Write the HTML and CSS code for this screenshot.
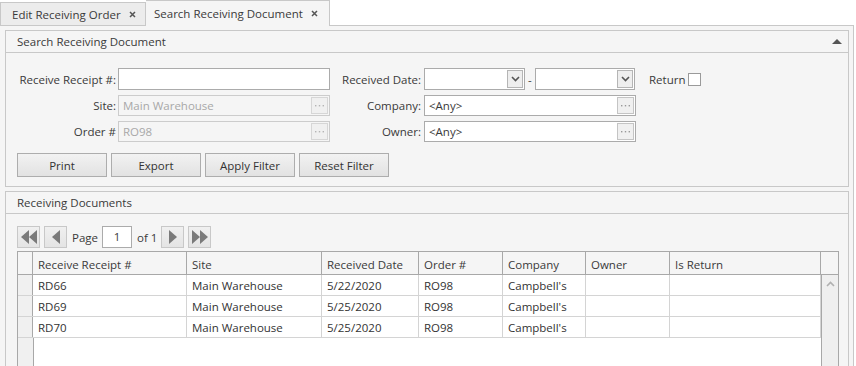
FILE: index.html
```html
<!DOCTYPE html>
<html>
<head>
<meta charset="utf-8">
<link rel="stylesheet" href="styles.css">
</head>
<body>
<div class="tabs">
  <div class="tab">Edit Receiving Order<span class="x"><svg width="7" height="7" viewBox="0 0 7 7"><path d="M1 1 L6 6 M6 1 L1 6" stroke="#555" stroke-width="1.5"/></svg></span></div>
  <div class="tab active">Search Receiving Document<span class="x"><svg width="7" height="7" viewBox="0 0 7 7"><path d="M1 1 L6 6 M6 1 L1 6" stroke="#555" stroke-width="1.5"/></svg></span></div>
</div>
<div class="main">
  <section class="panel search">
    <header class="panel-head"><span>Search Receiving Document</span><span class="collapse"></span></header>
    <div class="form">
      <div class="fgroup">
        <label>Receive Receipt #:</label><div class="input"></div>
        <label>Site:</label><div class="input disabled"><span class="val">Main Warehouse</span><span class="ell"><svg width="9" height="3" viewBox="0 0 9 3"><rect x="0" y="1" width="1.4" height="1.4" fill="#b4b4b4"/><rect x="3.8" y="1" width="1.4" height="1.4" fill="#b4b4b4"/><rect x="7.6" y="1" width="1.4" height="1.4" fill="#b4b4b4"/></svg></span></div>
        <label>Order #</label><div class="input disabled"><span class="val">RO98</span><span class="ell"><svg width="9" height="3" viewBox="0 0 9 3"><rect x="0" y="1" width="1.4" height="1.4" fill="#b4b4b4"/><rect x="3.8" y="1" width="1.4" height="1.4" fill="#b4b4b4"/><rect x="7.6" y="1" width="1.4" height="1.4" fill="#b4b4b4"/></svg></span></div>
      </div>
      <div class="fgroup right">
        <label>Received Date:</label>
        <div class="daterow">
          <div class="input date"><span class="dd"><svg width="9" height="6" viewBox="0 0 9 6"><path d="M1 1 L4.5 4.5 L8 1" fill="none" stroke="#555" stroke-width="1.6"/></svg></span></div>
          <span class="dash">-</span>
          <div class="input date"><span class="dd"><svg width="9" height="6" viewBox="0 0 9 6"><path d="M1 1 L4.5 4.5 L8 1" fill="none" stroke="#555" stroke-width="1.6"/></svg></span></div>
          <span class="ret">Return</span><span class="check"></span>
        </div>
        <label>Company:</label><div class="input narrow"><span class="val">&lt;Any&gt;</span><span class="ell"><svg width="9" height="3" viewBox="0 0 9 3"><rect x="0" y="1" width="1.4" height="1.4" fill="#999"/><rect x="3.8" y="1" width="1.4" height="1.4" fill="#999"/><rect x="7.6" y="1" width="1.4" height="1.4" fill="#999"/></svg></span></div>
        <label>Owner:</label><div class="input narrow"><span class="val">&lt;Any&gt;</span><span class="ell"><svg width="9" height="3" viewBox="0 0 9 3"><rect x="0" y="1" width="1.4" height="1.4" fill="#999"/><rect x="3.8" y="1" width="1.4" height="1.4" fill="#999"/><rect x="7.6" y="1" width="1.4" height="1.4" fill="#999"/></svg></span></div>
      </div>
    </div>
    <div class="buttons">
      <button class="btn">Print</button>
      <button class="btn">Export</button>
      <button class="btn">Apply Filter</button>
      <button class="btn">Reset Filter</button>
    </div>
  </section>
  <section class="panel docs">
    <header class="panel-head"><span>Receiving Documents</span></header>
    <div class="docs-body">
      <div class="pager">
        <span class="pbtn"><svg width="18" height="14" viewBox="0 0 18 14"><path d="M9 0 L1 7 L9 14 Z M17 0 L9 7 L17 14 Z" fill="#7a7a7a"/></svg></span>
        <span class="pbtn"><svg width="10" height="14" viewBox="0 0 10 14"><path d="M9 0 L1 7 L9 14 Z" fill="#7a7a7a"/></svg></span>
        <span class="ptext">Page</span>
        <span class="pinput">1</span>
        <span class="ptext">of 1</span>
        <span class="pbtn"><svg width="10" height="14" viewBox="0 0 10 14"><path d="M1 0 L9 7 L1 14 Z" fill="#7a7a7a"/></svg></span>
        <span class="pbtn"><svg width="18" height="14" viewBox="0 0 18 14"><path d="M1 0 L9 7 L1 14 Z M9 0 L17 7 L9 14 Z" fill="#7a7a7a"/></svg></span>
      </div>
      <div class="grid">
        <div class="ghead">
          <div class="hc sel"></div>
          <div class="hc">Receive Receipt #</div>
          <div class="hc">Site</div>
          <div class="hc">Received Date</div>
          <div class="hc">Order #</div>
          <div class="hc">Company</div>
          <div class="hc">Owner</div>
          <div class="hc">Is Return</div>
          <div class="hc last"></div>
        </div>
        <div class="gbody">
          <div class="rows">
            <div class="row"><div class="c sel"></div><div class="c">RD66</div><div class="c">Main Warehouse</div><div class="c">5/22/2020</div><div class="c">RO98</div><div class="c">Campbell's</div><div class="c"></div><div class="c"></div></div>
            <div class="row"><div class="c sel"></div><div class="c">RD69</div><div class="c">Main Warehouse</div><div class="c">5/25/2020</div><div class="c">RO98</div><div class="c">Campbell's</div><div class="c"></div><div class="c"></div></div>
            <div class="row"><div class="c sel"></div><div class="c">RD70</div><div class="c">Main Warehouse</div><div class="c">5/25/2020</div><div class="c">RO98</div><div class="c">Campbell's</div><div class="c"></div><div class="c"></div></div>
            <div class="filler"><div class="fsel"></div><div class="fwhite"></div></div>
          </div>
          <div class="vscroll"><svg width="9" height="6" viewBox="0 0 9 6"><path d="M1 5 L4.5 1.5 L8 5" fill="none" stroke="#b0b0b0" stroke-width="1.6"/></svg></div>
        </div>
      </div>
    </div>
  </section>
</div>
</body>
</html>
```

FILE: styles.css
```css
* { box-sizing: border-box; }
html, body { margin: 0; padding: 0; background: #fff; }
body {
  font-family: "Open Sans", "Noto Sans", sans-serif;
  font-size: 11.5px;
  color: #3a3a3a;
  width: 856px;
  height: 366px;
  overflow: hidden;
}
.tabs {
  display: flex;
  align-items: flex-end;
  height: 26px;
  position: relative;
  z-index: 1;
}
.tab {
  display: flex;
  align-items: center;
  height: 23px;
  padding: 0 0 0 11px;
  width: 146px;
  background: #ececec;
  border: 1px solid #c8c8c8;
  border-bottom: none;
  margin-bottom: 1px;
}
.tab.active {
  width: 184px;
  height: 26px;
  margin-bottom: 0;
  background: #f5f5f5;
  border-left: none;
  padding-left: 8px;
}
.tab .x {
  margin-left: auto;
  margin-right: 9px;
  display: flex;
}
.tab.active .x { margin-right: 11px; }
.main {
  background: #f5f5f5;
  border-top: 1px solid #c8c8c8;
  border-right: 1px solid #c8c8c8;
  width: 854px;
  height: 341px;
  margin-top: -1px;
  padding: 4px 4px 0 5px;
  display: flex;
  flex-direction: column;
  gap: 4px;
  overflow: hidden;
}
.panel {
  border: 1px solid #c8c8c8;
  background: #f5f5f5;
  flex: none;
}
.panel-head {
  height: 22px;
  border-bottom: 1px solid #c8c8c8;
  display: flex;
  align-items: center;
  padding: 0 0 1px 11px;
}
.collapse {
  margin-left: auto;
  margin-right: 6px;
  width: 0; height: 0;
  border-left: 5px solid transparent;
  border-right: 5px solid transparent;
  border-bottom: 5px solid #555;
}
.form {
  display: flex;
  padding: 15px 0 0 11px;
}
.fgroup {
  display: grid;
  grid-template-columns: 99px 212px;
  grid-template-rows: 22px 21px 21px;
  column-gap: 2px;
  row-gap: 5px;
  align-items: center;
}
.fgroup.right {
  margin-left: 4px;
  grid-template-columns: 87px auto;
  column-gap: 3px;
}
label { text-align: right; white-space: nowrap; }
.input {
  height: 100%;
  border: 1px solid #ababab;
  background: #fff;
  display: flex;
  align-items: center;
  padding: 0 1px 0 4px;
}
.input.narrow { width: 212px; }
.input.disabled {
  background: #f5f5f5;
  border-color: #cccccc;
  color: #a8a8a8;
}
.val { flex: 1; }
.ell {
  width: 17px;
  height: 17px;
  border: 1px solid #d6d6d6;
  background: #f0f0f0;
  display: flex;
  align-items: center;
  justify-content: center;
}
.input.narrow .ell { border-color: #c4c4c4; }
.daterow { display: flex; align-items: center; height: 100%; }
.input.date { width: 101px; justify-content: flex-end; }
.dd {
  width: 16px; height: 18px;
  border: 1px solid #b5b5b5;
  background: #eeeeee;
  display: flex; align-items: center; justify-content: center;
}
.dash { margin: 0 4px 0 3px; width: 3px; }
.input.date + .dash + .input.date { width: 100px; }
.ret { margin-left: 14px; }
.check {
  width: 13px; height: 13px;
  border: 1px solid #9a9a9a;
  background: #fff;
  margin-left: 3px;
}
.buttons {
  display: flex;
  gap: 4px;
  padding: 11px 0 9px 11px;
}
.btn {
  width: 90px;
  height: 24px;
  font: inherit;
  color: #333;
  border: 1px solid #adadad;
  background: linear-gradient(#f2f2f2, #e2e2e2);
  padding: 0;
}
.docs-body { padding: 12px 9px 0 11px; }
.pager { display: flex; align-items: center; height: 22px; }
.pbtn {
  width: 23px; height: 22px;
  border: 1px solid #c8c8c8;
  background: linear-gradient(#f0f0f0, #e4e4e4);
  display: flex; align-items: center; justify-content: center;
  margin-right: 4px;
}
.ptext { margin: 0 4px 0 1px; }
.pinput {
  width: 30px; height: 22px;
  border: 1px solid #ababab;
  background: #fff;
  text-align: center;
  line-height: 20px;
  margin: 0 4px 0 0;
}
.grid {
  margin-top: 3px;
  border: 1px solid #a8a8a8;
  width: 822px;
  background: #fff;
}
.ghead {
  display: grid;
  grid-template-columns: 15px 154px 135px 97px 84px 83px 84px 151px 17px;
  height: 23px;
  border-bottom: 1px solid #a8a8a8;
  background: #f5f5f5;
}
.hc {
  border-right: 1px solid #a8a8a8;
  padding: 2px 0 0 5px;
  display: flex; align-items: center;
}
.hc.last { border-right: none; }
.gbody { display: flex; height: 110px; }
.rows { display: flex; flex-direction: column; width: 803px; }
.row {
  display: grid;
  grid-template-columns: 15px 154px 135px 97px 84px 83px 84px 151px;
  height: 21px;
  border-bottom: 1px solid #d4d4d4;
}
.c {
  border-right: 1px solid #d4d4d4;
  padding: 1px 0 0 5px;
  display: flex; align-items: center;
  color: #333;
}
.c.sel { background: #f0f0f0; border-right-color: #a8a8a8; }
.filler { flex: 1; display: flex; }
.fsel { width: 16px; background: #f0f0f0; border-right: 1px solid #a8a8a8; }
.fwhite { flex: 1; }
.vscroll {
  width: 17px;
  background: #efefef;
  border-left: 1px solid #a8a8a8;
  display: flex; justify-content: center;
  padding-top: 6px;
}
.vscroll svg { display: block; }
```
